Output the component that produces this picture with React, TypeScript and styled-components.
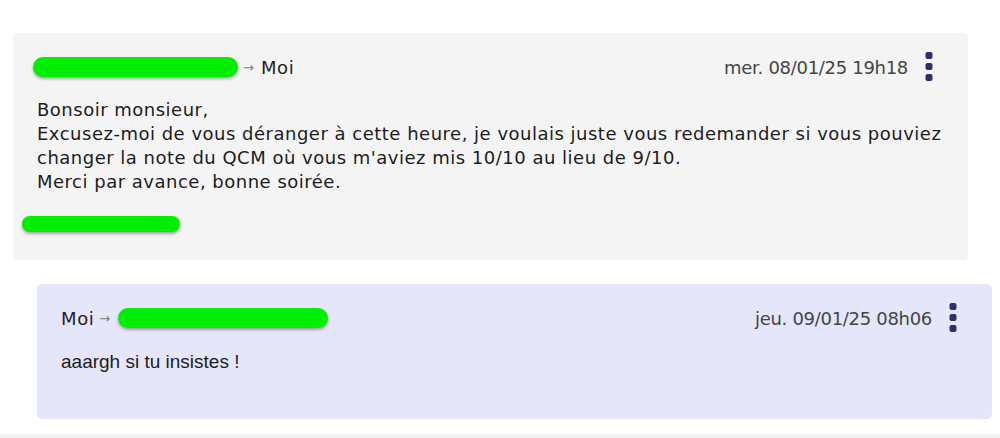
import React from "react";
import styled, { createGlobalStyle } from "styled-components";

const GlobalStyle = createGlobalStyle`
  html, body {
    margin: 0;
    padding: 0;
    background: #ffffff;
  }
  body {
    font-family: "DejaVu Sans", "Open Sans", sans-serif;
    color: #222222;
  }
`;

type Message = {
  mine: boolean;
  date: string;
  redactWidth: number;
  lines: string[];
  signature?: boolean;
};

const messages: Message[] = [
  {
    mine: false,
    date: "mer. 08/01/25 19h18",
    redactWidth: 205,
    lines: [
      "Bonsoir monsieur,",
      "Excusez-moi de vous déranger à cette heure, je voulais juste vous redemander si vous pouviez",
      "changer la note du QCM où vous m'aviez mis 10/10 au lieu de 9/10.",
      "Merci par avance, bonne soirée.",
    ],
    signature: true,
  },
  {
    mine: true,
    date: "jeu. 09/01/25 08h06",
    redactWidth: 210,
    lines: ["aaargh si tu insistes !"],
  },
];

const MenuDots: React.FC = () => (
  <svg width="8" height="30" viewBox="0 0 8 30" fill="#2c2f6c">
    <rect x="0.5" y="0" width="7" height="7" rx="2" />
    <rect x="0.5" y="11" width="7" height="7" rx="2" />
    <rect x="0.5" y="22" width="7" height="7" rx="2" />
  </svg>
);

const MessageCard: React.FC<{ message: Message }> = ({ message }) => {
  const redaction = (
    <Redaction $leading={!message.mine} style={{ width: message.redactWidth }} />
  );
  return (
    <Card $mine={message.mine}>
      <Header>
        <Parties>
          {message.mine ? (
            <>
              <Name>Moi</Name>
              <Arrow>→</Arrow>
              {redaction}
            </>
          ) : (
            <>
              {redaction}
              <Arrow>→</Arrow>
              <Name>Moi</Name>
            </>
          )}
        </Parties>
        <DateText>{message.date}</DateText>
        <MenuButton aria-label="options">
          <MenuDots />
        </MenuButton>
      </Header>
      <Body $mine={message.mine}>
        {message.lines.map((line) => (
          <Line key={line}>{line}</Line>
        ))}
        {message.signature && (
          <Signature>
            <SignatureMark />
          </Signature>
        )}
      </Body>
    </Card>
  );
};

const App: React.FC = () => {
  return (
    <>
      <GlobalStyle />
      <Thread>
        {messages.map((m) => (
          <MessageCard key={m.date} message={m} />
        ))}
      </Thread>
      <BottomEdge />
    </>
  );
};

export default App;

const Thread = styled.section`
  display: flex;
  flex-direction: column;
  gap: 24px;
  padding-top: 33px;
`;

const Card = styled.article<{ $mine: boolean }>`
  display: flex;
  flex-direction: column;
  width: 955px;
  margin-left: ${(p) => (p.$mine ? "37px" : "13px")};
  padding: 22px 35px 0 24px;
  box-sizing: border-box;
  background: ${(p) => (p.$mine ? "#e6e6fa" : "#f4f4f4")};
  border-radius: 5px;
`;

const Header = styled.div`
  display: flex;
  align-items: center;
  height: 24px;
`;

const Parties = styled.div`
  display: flex;
  align-items: center;
  flex: 1;
`;

const Name = styled.span`
  color: #1f1f1f;
  font-size: 18px;
  letter-spacing: 0.6px;
`;

const Arrow = styled.span`
  color: #808080;
  font-size: 13px;
  margin: 0 7px 0 5px;
`;

const Redaction = styled.span<{ $leading: boolean }>`
  display: inline-block;
  height: 20px;
  background: #00ef00;
  border-radius: 10px;
  box-shadow: 0 2px 3px rgba(40, 90, 40, 0.45);
  margin-left: ${(p) => (p.$leading ? "-4px" : "1px")};
`;

const DateText = styled.span`
  font-size: 18px;
  color: #444444;
  letter-spacing: -0.3px;
`;

const MenuButton = styled.button`
  display: flex;
  align-items: center;
  justify-content: center;
  width: 8px;
  height: 30px;
  margin-left: 17px;
  padding: 0;
  border: none;
  background: none;
`;

const Body = styled.div<{ $mine: boolean }>`
  display: flex;
  flex-direction: column;
  padding: ${(p) => (p.$mine ? "20px 0 45px" : "19px 0 24px")};
  font-family: ${(p) =>
    p.$mine ? '"Liberation Sans", Arial, sans-serif' : '"DejaVu Sans", sans-serif'};
  font-size: ${(p) => (p.$mine ? "19px" : "18px")};
  letter-spacing: ${(p) => (p.$mine ? "0" : "0.5px")};
  line-height: 24px;
  color: #1c1c1c;
`;

const Line = styled.p`
  margin: 0;
  white-space: nowrap;
`;

const Signature = styled.div`
  display: flex;
  align-items: center;
  height: 24px;
  margin-top: 18px;
`;

const SignatureMark = styled.span`
  display: inline-block;
  width: 158px;
  height: 16px;
  margin-left: -15px;
  background: #00ef00;
  border-radius: 8px;
  box-shadow: 0 2px 3px rgba(40, 90, 40, 0.45);
`;

const BottomEdge = styled.div`
  height: 4px;
  margin-top: 15px;
  background: #f2f2f2;
`;
